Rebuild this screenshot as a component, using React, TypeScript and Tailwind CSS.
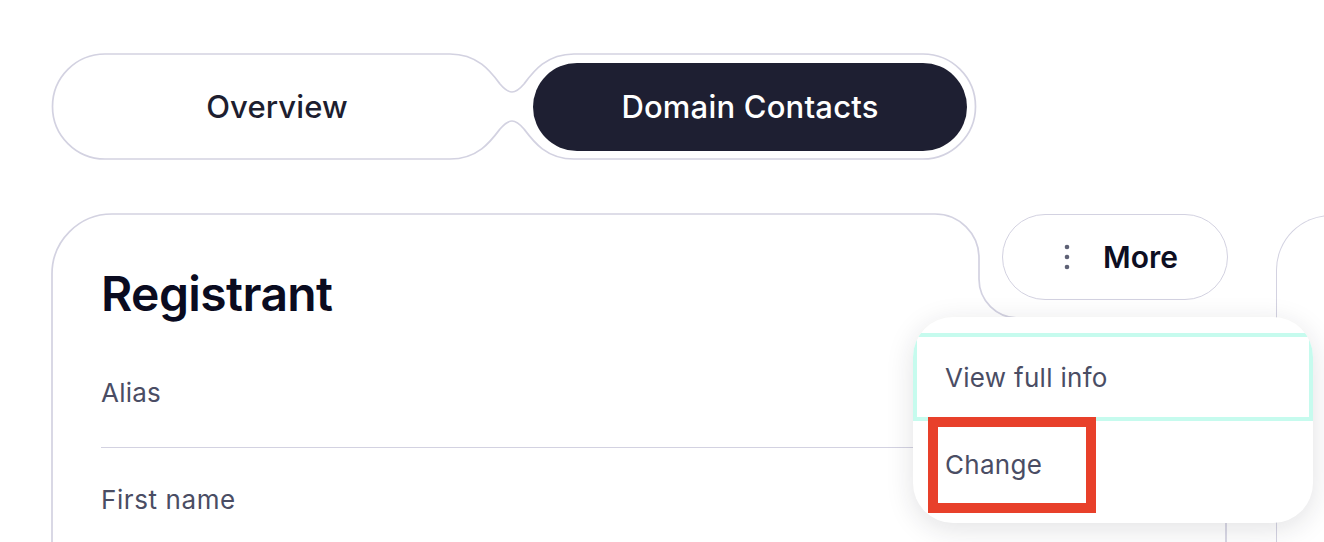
import React from "react";

const line = "#d3d2e1";

function Kebab() {
  return (
    <svg width="6" height="26" viewBox="0 0 6 26" className="shrink-0">
      <circle cx="3" cy="3" r="2.3" fill="#5e6175" />
      <circle cx="3" cy="13" r="2.3" fill="#5e6175" />
      <circle cx="3" cy="23" r="2.3" fill="#5e6175" />
    </svg>
  );
}

function Tabs() {
  return (
    <div className="grid h-[107px] w-[926px]">
      <svg
        width="926"
        height="107"
        viewBox="0 0 926 107"
        className="col-start-1 row-start-1"
        fill="none"
      >
        <path
          d="M 54 1 H 399 C 427 1 440 19 449 31 C 455 38 458 39 461 39 C 464 39 467 38 473 31 C 482 19 495 1 523 1 H 872 A 52.5 52.5 0 0 1 872 106 H 523 C 495 106 482 88 473 76 C 467 69 464 68 461 68 C 458 68 455 69 449 76 C 440 88 427 106 399 106 H 54 A 52.5 52.5 0 0 1 54 1 Z"
          stroke={line}
          strokeWidth="1.7"
        />
      </svg>
      <div className="col-start-1 row-start-1 flex">
        <button className="flex w-[461px] items-center justify-center pr-[9px] pt-[2px] text-[31px] font-medium tracking-[0.1px] text-[#1d1e30]">
          Overview
        </button>
        <div className="flex flex-1 items-center pl-[21px] pr-[10px]">
          <div className="flex h-[88px] w-full items-center justify-center rounded-full bg-[#1e1f32] pt-[2px] text-[31px] font-medium tracking-[0.2px] text-white">
            Domain Contacts
          </div>
        </div>
      </div>
    </div>
  );
}

function Dropdown() {
  return (
    <div className="absolute left-[862px] top-[104px] w-[400px] overflow-hidden rounded-[40px] bg-white pt-[16px] pb-[16px] shadow-[0_6px_28px_rgba(30,31,50,0.13)]">
      <div className="flex h-[88px] items-center border-4 border-[#c6fbee] pl-[28px] text-[26px] tracking-[0.3px] text-[#4a4d64]">
        View full info
      </div>
      <div className="flex h-[86px] items-center pl-[32px] text-[26px] tracking-[0.3px] text-[#4a4d64]">
        Change
      </div>
      <div className="absolute left-[15px] top-[100px] h-[96px] w-[168px] border-[10px] border-[#e8402a]" />
    </div>
  );
}

function RegistrantCard() {
  return (
    <div className="relative grid w-[1177px]">
      <svg
        width="1177"
        height="400"
        viewBox="0 0 1177 400"
        className="col-start-1 row-start-1"
        fill="none"
      >
        <path
          d="M 1 400 V 61 A 60 60 0 0 1 61 1 H 884 A 44 44 0 0 1 928 45 V 66 A 39 39 0 0 0 967 105 H 1135 A 40 40 0 0 1 1175 145 V 400"
          stroke={line}
          strokeWidth="1.7"
        />
      </svg>
      <div className="col-start-1 row-start-1 flex flex-col">
        <div className="flex h-[105px] items-start justify-between">
          <h2 className="pl-[50px] pt-[57px] text-[48px] font-semibold leading-none tracking-[-0.6px] text-[#0a0b20]">
            Registrant
          </h2>
          <button className="mt-[1px] flex h-[86px] w-[226px] items-center justify-center gap-[33px] rounded-full border-[1.7px] border-[#d3d2e1] pl-[12px]">
            <Kebab />
            <span className="text-[30px] font-semibold leading-none text-[#0d0e22]">More</span>
          </button>
        </div>
        <div className="px-[50px]">
          <div className="border-b-[1.7px] border-[#d3d2e1] pt-[62px] pb-[41px] text-[26px] leading-none tracking-[0.2px] text-[#4a4d64]">
            Alias
          </div>
          <div className="pt-[39px] text-[26px] leading-none tracking-[0.6px] text-[#4a4d64]">
            First name
          </div>
        </div>
      </div>
      <Dropdown />
    </div>
  );
}

export default function App() {
  return (
    <div
      className="h-[542px] w-[1324px] overflow-hidden bg-white pl-[51px] pt-[53px]"
      style={{ fontFamily: "Inter, 'Noto Sans', sans-serif" }}
    >
      <Tabs />
      <div className="mt-[53px] flex items-start">
        <RegistrantCard />
        <div className="ml-[48px] mt-[2px] h-[400px] w-[120px] shrink-0 rounded-tl-[55px] border-l-[1.7px] border-t-[1.7px] border-[#d3d2e1]" />
      </div>
    </div>
  );
}
